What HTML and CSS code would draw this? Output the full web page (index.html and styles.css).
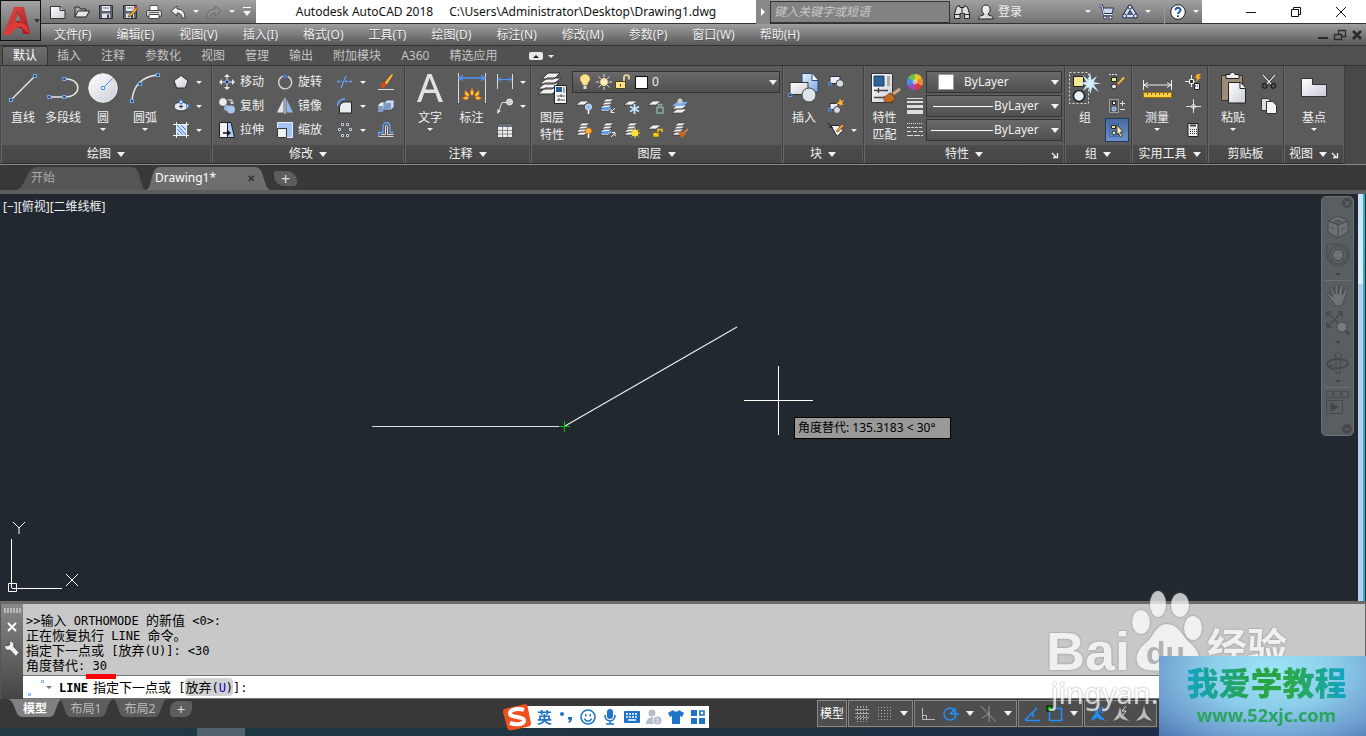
FILE: index.html
```html
<!DOCTYPE html>
<html lang="zh-CN">
<head>
<meta charset="utf-8">
<title>Autodesk AutoCAD 2018</title>
<link rel="stylesheet" href="styles.css">
</head>
<body>
<svg class="sprite" aria-hidden="true">
<defs>
<linearGradient id="gw" x1="0" y1="0" x2="1" y2="1"><stop offset="0" stop-color="#fff"/><stop offset="1" stop-color="#c9cdd8"/></linearGradient>
<linearGradient id="gb" x1="0" y1="0" x2="1" y2="1"><stop offset="0" stop-color="#e4f0ff"/><stop offset="1" stop-color="#7fa8dc"/></linearGradient>
<linearGradient id="gr" x1="0" y1="0" x2="1" y2="1"><stop offset="0" stop-color="#e8554f"/><stop offset="1" stop-color="#a3151c"/></linearGradient>
</defs>
<symbol id="new" viewBox="0 0 16 16"><path d="M.5 2.500h9.500l5 4v8H.5z" fill="url(#gw)" stroke="#333"/><path d="M10 2.500v4h5" fill="#bbb" stroke="#333"/></symbol>
<symbol id="open" viewBox="0 0 16 16"><path d="M1 13V3h4l1.500 2H12v2" fill="#aaa" stroke="#222"/><path d="M1 13l3-6h11.500l-3.500 6z" fill="#e3e6ea" stroke="#222"/></symbol>
<symbol id="save" viewBox="0 0 16 16"><path d="M1.500 1.500h13v13h-13z" fill="#5c6470" stroke="#2d3139"/><path d="M4 2h8v5H4z" fill="#e8ecf4"/><path d="M5 4h6" stroke="#777"/><path d="M4 9.500h8V14H4z" fill="#dfe3ea"/><path d="M9 10.500h2V14H9z" fill="#3b3f48"/></symbol>
<symbol id="saveas" viewBox="0 0 16 16"><use href="#save"/><path d="M7 11l7-8 2 2-7 7-3 1z" fill="#f2b33d" stroke="#5c3a14" stroke-width=".7"/><path d="M13 4l1.500-2L16.500 4 15 5.500z" fill="#d9513a"/></symbol>
<symbol id="print" viewBox="0 0 16 16"><path d="M4 1.500h8v5H4z" fill="#fff" stroke="#555"/><rect x=".5" y="6.500" width="15" height="6" rx="1.500" fill="#d5d9df" stroke="#444"/><path d="M3 10.500h10v4H3z" fill="#fff" stroke="#444"/><path d="M3 8.500h10" stroke="#666"/></symbol>
<symbol id="undo" viewBox="0 0 16 16"><path d="M1 7l6-5v3c5 0 8 3 8 9h-3c0-4-2-5-5-5v3z" fill="#eee" stroke="#333" stroke-width=".9"/></symbol>
<symbol id="redo" viewBox="0 0 16 16"><path d="M15 7L9 2v3c-5 0-8 3-8 9h3c0-4 2-5 5-5v3z" fill="#8f8f8f" stroke="#666" stroke-width=".9"/></symbol>
<symbol id="binoc" viewBox="0 0 16 16"><path d="M2.500 3l3-1.500.5 2h4l.5-2 3 1.500 2 7v4.500h-5v-5H8.500v0h-1v0H6v5H.5V10z" fill="#ddd" stroke="#222"/><path d="M1 10.500h5m4 0h5M8 4v5" stroke="#222"/></symbol>
<symbol id="user" viewBox="0 0 16 16"><path d="M.5 15c.5-3 3-3.500 5-4l.5-1C4 8.500 3.500 6 4 4c.6-4 7.400-4 8 0 .5 2 0 4.500-2 6l.5 1c2 .5 4.500 1 5 4z" fill="url(#gw)" stroke="#222"/></symbol>
<symbol id="cart" viewBox="0 0 16 16"><path d="M1 2h3l2 8h7" fill="none" stroke="#23304d" stroke-width="2.600"/><path d="M5 4h10.500L14 9.500H6z" fill="#ccd8ee" stroke="#23304d"/><path d="M1 2h3l2 8.500h8" fill="none" stroke="#eef" stroke-width="1"/><circle cx="7" cy="13.500" r="1.600" fill="#eef" stroke="#23304d"/><circle cx="12.500" cy="13.500" r="1.600" fill="#eef" stroke="#23304d"/></symbol>
<symbol id="a360" viewBox="0 0 16 16"><path d="M8 3L2.500 12h11z" fill="none" stroke="#23304d" stroke-width="4.500" stroke-linejoin="round"/><path d="M8 3L2.500 12h11z" fill="none" stroke="#d5e0f2" stroke-width="2.500" stroke-linejoin="round"/><circle cx="8" cy="3" r="2" fill="#d5e0f2" stroke="#23304d"/><circle cx="2.500" cy="12" r="2" fill="#d5e0f2" stroke="#23304d"/><circle cx="13.500" cy="12" r="2" fill="#d5e0f2" stroke="#23304d"/></symbol>
<symbol id="help" viewBox="0 0 16 16"><circle cx="8" cy="8" r="7.300" fill="#fff" stroke="#222"/><path d="M5.500 6.300c0-3.600 5.200-3.300 5 0C10.400 8 8 8 8 10" fill="none" stroke="#2456ad" stroke-width="2"/><path d="M7 11.300h2v1.800H7z" fill="#2456ad"/></symbol>
<symbol id="logo" viewBox="0 0 32 32"><path d="M1 30L12 2h10l6 27h-7l-1.500-6h-8L8 30z" fill="url(#gr)"/><path d="M14 4l6 12-3-8-3 9c-4 1-7 4-9 9l7-4 11 2-5-6z" fill="#8e171d"/><path d="M1 30c4-9 8-13 14-13l9 3 4 9-9-7c-4 0-8 3-11 8z" fill="#dd3c38"/><path d="M13 16l3.500-8 2 8z" fill="#7e7e7e"/></symbol>
<symbol id="line" viewBox="0 0 32 32"><path d="M4 28L28 4" stroke="#e6e6e6" stroke-width="1.400"/><path d="M2.500 26.500h3v3h-3zm24-24h3v3h-3z" fill="#333" stroke="#6da8ff" stroke-width="1.200"/></symbol>
<symbol id="pline" viewBox="0 0 32 32"><path d="M2 25h16c17 0 17-18 1-18" fill="none" stroke="#e6e6e6" stroke-width="1.500"/><path d="M.8 23.500h3v3h-3zm15 0h3v3h-3zm0-18h3v3h-3z" fill="#333" stroke="#6da8ff" stroke-width="1.200"/></symbol>
<symbol id="circle" viewBox="0 0 32 32"><circle cx="16" cy="16" r="14.300" fill="url(#gw)" stroke="#eee"/><path d="M16 16L26 6" stroke="#4b8df0"/><path d="M14.500 14.500h3v3h-3z" fill="#fff" stroke="#4b8df0"/></symbol>
<symbol id="arc" viewBox="0 0 32 32"><path d="M3 29C4 14 12 5 28 3" fill="none" stroke="#e6e6e6" stroke-width="1.500"/><path d="M1.500 27.500h3v3h-3zm8-17h3v3h-3zm18-9h3v3h-3z" fill="#333" stroke="#6da8ff" stroke-width="1.200"/></symbol>
<symbol id="poly" viewBox="0 0 16 16"><path d="M8 1.500l7 5.300L12.300 14H3.700L1 6.800z" fill="url(#gw)" stroke="#333"/></symbol>
<symbol id="ellipse" viewBox="0 0 16 16"><ellipse cx="8" cy="8.500" rx="7" ry="4.500" fill="#e1e5ec" stroke="#333"/><path d="M6 8.500h4M8 6.500v4" stroke="#333"/><path d="M6.500 2.500h3v3h-3zm7 4h2v3h-2z" fill="#ddd" stroke="#4b8df0"/></symbol>
<symbol id="hatch" viewBox="0 0 16 16"><path d="M3.500 0v16M13.500 0v16M0 2.500h16M0 13.500h16" stroke="#f0f0f0"/><path d="M4 3h9v10H4z" fill="#cfe1ff"/><path d="M4 7l6 6M4 3l9 10M8 3l5 5M4 11l2 2" stroke="#3b74d8"/></symbol>
<symbol id="move" viewBox="0 0 16 16"><path d="M8 0l3 3H5zM8 16l-3-3h6zM0 8l3-3v6zM16 8l-3 3V5z" fill="#e8e8e8"/><path d="M8 3v3m0 4v3M3 8h3m4 0h3" stroke="#eee"/><path d="M6.500 6.500h3v3h-3z" fill="#223" stroke="#69a3ff"/></symbol>
<symbol id="copy" viewBox="0 0 16 16"><circle cx="4" cy="4" r="3.800" fill="#ececf0"/><circle cx="8" cy="10" r="3" fill="#99b4dc"/><circle cx="12" cy="11.500" r="4" fill="#a9c4ec"/><path d="M9 2h4v3m-2-1l2 2 2-2" fill="none" stroke="#eee"/></symbol>
<symbol id="stretch" viewBox="0 0 16 16"><path d="M.5.5h8v15h-8z" fill="#f3f3f5" stroke="#222"/><path d="M8.500.5H12l3.500 15H8.500z" fill="#a8cdf8" stroke="#222"/><path d="M4 11h6M8 8.500l3 2.500-3 2.500" fill="none" stroke="#111" stroke-width="1.300"/></symbol>
<symbol id="rotate" viewBox="0 0 16 16"><path d="M6 2.200a6.500 6.500 0 1 0 5 .3" fill="none" stroke="#d9d9d9" stroke-width="1.400"/><path d="M7 0l4 2.500L7 5z" fill="#3f7fe4"/></symbol>
<symbol id="mirror" viewBox="0 0 16 16"><path d="M6.500 1v13.500H0z" fill="#e6e6e8"/><path d="M9.500 1v13.500H16z" fill="#8db7ea"/><path d="M8 0v16" stroke="#eee"/></symbol>
<symbol id="scale" viewBox="0 0 16 16"><path d="M.5.5h15v15H.5z" fill="#a4c3f2" stroke="#e9eef8"/><path d="M.5 6.500h9v9h-9z" fill="#f0f0f4" stroke="#333"/></symbol>
<symbol id="trim" viewBox="0 0 16 16"><path d="M0 7.500h5M8 7.500h8" stroke="#69a3ff" stroke-width="1.300" stroke-dasharray="3 1"/><path d="M4 14L9 2" stroke="#69a3ff" stroke-width="1.200"/></symbol>
<symbol id="fillet" viewBox="0 0 16 16"><path d="M2.500 15V10c0-4 3-6 6-6h6v11z" fill="#e9edf2" stroke="#222"/><path d="M0 8C1 4 3 1 8 .8" fill="none" stroke="#69a3ff" stroke-width="1.500"/></symbol>
<symbol id="array" viewBox="0 0 16 16"><path d="M4.500 1.500h2v2h-2zm5 0h2v2h-2zm-8 5h2v2h-2zm11 0h2v2h-2zm-8 6h2v2h-2zm5 0h2v2h-2z" fill="#222" stroke="#c9d4e6"/></symbol>
<symbol id="erase" viewBox="0 0 16 16"><path d="M6 9l7-9h3l-7 11z" fill="#f4b644" stroke="#5a3010" stroke-width=".6"/><path d="M3 11c0-3 3-3 5-1 0 4-3 4-5 4z" fill="#d9471f"/><path d="M0 15.500h16" stroke="#ddd"/></symbol>
<symbol id="explode" viewBox="0 0 16 16"><path d="M0 7l3-3h4v5l-2 5H0z" fill="#dce8f6" stroke="#444" stroke-width=".6"/><path d="M6 5l3-3h7v7l-3 3H6z" fill="#c4d8f0" stroke="#444" stroke-width=".6"/><path d="M0 8h5v6H0zM6 5h7v7H6z" fill="#7d9cc4"/></symbol>
<symbol id="offset" viewBox="0 0 16 16"><path d="M.5 14.500v-4h4.500V5c0-6 7-6 7 0v5.500h3.500" fill="none" stroke="#69a3ff" stroke-width="1.300"/><path d="M.5 14.500h15M3 12.500h4.500V5c0-2.500 2-2.500 2 0v7.500h6" fill="none" stroke="#d8d8d8"/></symbol>
<symbol id="text" viewBox="0 0 32 32"><path d="M3 30L13.500 2h4L29 30h-4.300l-3.300-9H10.200L7 30zm8.500-12.500h8.700L15.700 6z" fill="#e2e2e2"/></symbol>
<symbol id="dim" viewBox="0 0 32 32"><path d="M2.500 1v30M29.500 1v30" stroke="#ddd"/><path d="M3 6h26M7 3.500L3 6l4 2.500M25 3.500L29 6l-4 2.500" fill="none" stroke="#4f94ff" stroke-width="1.400"/><path d="M16 16l2 5-2 3-2-3zM9 18l4 4v3l-4-2zM23 18l-4 4v3l4-2zM6 26l5-2 2 2-3 2zM26 26l-5-2-2 2 3 2z" fill="#ffc93c" stroke="#d06018" stroke-width=".7"/></symbol>
<symbol id="dims" viewBox="0 0 16 16"><path d="M.5 0v15M15.500 0v15" stroke="#ddd"/><path d="M1 5.500h14M4 3L1 5.500 4 8M12 3l3 2.500L12 8" fill="none" stroke="#4f94ff"/></symbol>
<symbol id="leader" viewBox="0 0 16 16"><path d="M1 15L5 4.500h5" fill="none" stroke="#ddd"/><circle cx="12.500" cy="4" r="3" fill="#ccc" stroke="#eee"/><path d="M0 16l.5-5L4 13z" fill="#ddd"/></symbol>
<symbol id="table" viewBox="0 0 16 16"><path d="M.5 1.500h15v14H.5z" fill="#eee" stroke="#555"/><path d="M1 2h14v3H1z" fill="#666e7e"/><path d="M1 8.500h14M1 12h14M5.500 5v10M10.500 5v10" stroke="#888"/></symbol>
<symbol id="layerprop" viewBox="0 0 32 32"><path d="M2 22l7-6h14l-7 6zM2 17l7-6h14l-7 6zM4 12l7-6h14l-7 6zM6 7l6-6h12l-6 6z" fill="#f1f1f1" stroke="#333"/><path d="M18.500 13.500h12v18h-12z" fill="#f4f6fa" stroke="#222"/><path d="M20 15h6v5h-6z" fill="#245a9c"/><path d="M28 15v6M21 24h8M21 28h8M25 22v3M23 26v3" stroke="#555"/></symbol>
<symbol id="stack" viewBox="0 0 16 16"><path d="M0 13l4-3h8l-4 3zM0 10l4-3h8l-4 3zM2 7l3-3h8l-4 3zM3 4l3-3h8l-4 3z" fill="#f3f3f3" stroke="#333" stroke-width=".6"/></symbol>
<symbol id="sheet" viewBox="0 0 16 16"><path d="M0 7l5-4h8L8 7z" fill="#f3f3f3" stroke="#333" stroke-width=".6"/></symbol>
<symbol id="l1" viewBox="0 0 16 16"><use href="#sheet"/><circle cx="12.500" cy="9" r="3" fill="#8bc0f8" stroke="#ddf"/><path d="M12.500 12v4" stroke="#fff" stroke-width="1.500"/></symbol>
<symbol id="l2" viewBox="0 0 16 16"><use href="#stack"/><path d="M0 12l4-3h8l-4 3z" fill="#5e9df2"/><path d="M15 10l-4 4m0-3v3.500h3.500" fill="none" stroke="#eee"/></symbol>
<symbol id="l3" viewBox="0 0 16 16"><use href="#sheet"/><path d="M10.500 6v10M6 8.500l9 5m0-5l-9 5" stroke="#c6e4ff" stroke-width="1.800"/></symbol>
<symbol id="l4" viewBox="0 0 16 16"><use href="#sheet"/><path d="M9 9.500h6V15H9zM10.500 9V6.500h3V9" fill="none" stroke="#89aaa3" stroke-width="1.500"/></symbol>
<symbol id="l5" viewBox="0 0 16 16"><path d="M0 15l5-4h10l-5 4zM0 11l5-4h10l-5 4z" fill="#eee" stroke="#333" stroke-width=".6"/><path d="M0 8l5-4h11l-5 4z" fill="#7eb2f5"/><circle cx="8" cy="3" r="2.500" fill="#ccc"/></symbol>
<symbol id="l6" viewBox="0 0 16 16"><use href="#stack"/><circle cx="12.500" cy="9" r="3" fill="#ffb338" stroke="#e07215"/><path d="M12.500 12v4" stroke="#fff" stroke-width="1.500"/></symbol>
<symbol id="l7" viewBox="0 0 16 16"><use href="#stack"/><path d="M0 12l4-3h8l-4 3z" fill="#5e9df2"/><path d="M11 15l4-4m-3.500-.5H15V14" fill="none" stroke="#eee"/></symbol>
<symbol id="l8" viewBox="0 0 16 16"><use href="#stack"/><path d="M11 6v10M6 11h10M7.500 7.500l7 7m0-7l-7 7" stroke="#ffc933"/><circle cx="11" cy="11" r="3.200" fill="#ffe03a"/></symbol>
<symbol id="l9" viewBox="0 0 16 16"><use href="#sheet"/><path d="M5 10.500h6V15H5z" fill="#f7c51a" stroke="#5a4500" stroke-width=".5"/><path d="M10 10V7.500h4V10" fill="none" stroke="#f7c51a" stroke-width="1.500"/></symbol>
<symbol id="l10" viewBox="0 0 16 16"><use href="#stack"/><path d="M6 11l4-2 4 3-4 4z" fill="#c8691c"/><path d="M12 11l4-4" stroke="#d9914a" stroke-width="1.500"/></symbol>
<symbol id="bulb" viewBox="0 0 16 16"><path d="M8 .8c-5 0-5.500 5-3 7.500L6.500 11h3L11 8.300C13.500 5.800 13 .8 8 .8z" fill="#ffe28d" stroke="#f8d66f"/><path d="M6.500 12h3v3h-3z" fill="#ddd"/></symbol>
<symbol id="sun" viewBox="0 0 16 16"><path d="M8 0v16M0 8h16M2.500 2.500l11 11m0-11l-11 11" stroke="#ddd"/><circle cx="8" cy="8" r="4.300" fill="#fff0bb" stroke="#6a5b3c"/></symbol>
<symbol id="unlock" viewBox="0 0 16 16"><path d="M.5 7.500h10v7H.5z" fill="#ffe37e" stroke="#4a431f"/><path d="M9 7V3c0-2.500 5-2.500 5 0v2.500" fill="none" stroke="#ead99a" stroke-width="1.800"/><path d="M5.500 10v2.500" stroke="#333"/></symbol>
<symbol id="insert" viewBox="0 0 32 32"><path d="M14 1.500h10l6 7V20H14z" fill="url(#gb)" stroke="#2d4a72"/><path d="M24 1.500v7h6" fill="#fff" stroke="#2d4a72"/><path d="M2 10.500h18v12H2z" fill="url(#gw)" stroke="#333"/><circle cx="21" cy="23" r="7" fill="#dfe4ec" stroke="#444"/><path d="M.8 21.500h3v3h-3z" fill="#223" stroke="#69a3ff"/></symbol>
<symbol id="b1" viewBox="0 0 16 16"><path d="M2 2.500h10v7H2z" fill="#eef" stroke="#333"/><circle cx="12" cy="9.500" r="3.800" fill="#d8dbe2" stroke="#444"/><path d="M.7 8.500h2.500V11H.7z" fill="#223" stroke="#69a3ff"/></symbol>
<symbol id="b2" viewBox="0 0 16 16"><path d="M2 5.500h8v6H2z" fill="#eef" stroke="#333"/><circle cx="9" cy="12" r="3.500" fill="#d8dbe2" stroke="#444"/><path d="M12 0l1 3 3-1-2 3 2 2-3-.5L12 9l-.7-3L8 6l3-2z" fill="#ffb52e"/><path d="M.7 10.500h2.500V13H.7z" fill="#223" stroke="#69a3ff"/></symbol>
<symbol id="b3" viewBox="0 0 16 16"><path d="M3 3.500h8l4 5-6 6z" fill="#f5f5f5" stroke="#222"/><path d="M8 9l6-7 2 2-6 6z" fill="#f2a13a" stroke="#5a3010" stroke-width=".6"/><path d="M0 1l4 4m-3 0l4 1" stroke="#222"/></symbol>
<symbol id="match" viewBox="0 0 32 32"><path d="M2.500 1.500h21v29h-21z" fill="url(#gw)" stroke="#333"/><path d="M5 4h10v10H5z" fill="#2e6299" stroke="#173e69"/><path d="M19.500 4v10" stroke="#aaa" stroke-width="3"/><path d="M5 18.500h14M5 25.500h9M9.500 16v5" stroke="#444" stroke-width="1.400"/><path d="M14 25c4 0 5-4 8-4l4 5c-2 5-6 5-10 4z" fill="#c26a22" stroke="#5a2c0c" stroke-width=".7"/><path d="M24 22l7-5" stroke="#d0a887" stroke-width="3"/></symbol>
<symbol id="color" viewBox="0 0 16 16"><path d="M8 8V0a8 8 0 0 1 7 4z" fill="#f4c12a"/><path d="M8 8l7-4a8 8 0 0 1 0 8z" fill="#f08a2c"/><path d="M8 8l7 4a8 8 0 0 1-7 4z" fill="#df3a42"/><path d="M8 8v8a8 8 0 0 1-7-4z" fill="#9b4ac0"/><path d="M8 8l-7 4a8 8 0 0 1 0-8z" fill="#4f88e8"/><path d="M8 8L1 4a8 8 0 0 1 7-4z" fill="#64c447"/><circle cx="8" cy="8" r="2.500" fill="#fff" opacity=".5"/></symbol>
<symbol id="lweight" viewBox="0 0 16 16"><path d="M0 .5h16" stroke="#ddd"/><path d="M0 4h16" stroke="#ddd" stroke-width="2"/><path d="M0 8.500h16" stroke="#ddd" stroke-width="3"/><path d="M0 14h16" stroke="#ddd" stroke-width="4"/></symbol>
<symbol id="ltype" viewBox="0 0 16 16"><path d="M0 1.500h16" stroke="#ddd" stroke-dasharray="1 1"/><path d="M0 5.500h16" stroke="#ddd" stroke-dasharray="3 1"/><path d="M0 9.500h16" stroke="#ddd" stroke-dasharray="4 2"/><path d="M0 13.500h16" stroke="#ddd" stroke-dasharray="6 1"/></symbol>
<symbol id="group" viewBox="0 0 32 32"><path d="M.5.500h19v31H.5z" fill="none" stroke="#ddd" stroke-dasharray="2 2"/><path d="M4.500 4.500h10v10h-10z" fill="#f1e98b" stroke="#222"/><circle cx="10" cy="24" r="5.500" fill="#e5f1fb" stroke="#222" stroke-width="1.500"/><path d="M21 0l1.500 8L28 4l-3.500 6 7.500 1.500-7.500 1L30 20l-7-5-1.500 7-2-7-6 4 4-6-9-2 9-1-4-7 6 5z" fill="#cfeeff"/></symbol>
<symbol id="g1" viewBox="0 0 16 16"><path d="M0 .5h8" stroke="#ddd" stroke-dasharray="2 1"/><path d="M2.500 3.500h5v4h-5z" fill="#f1e98b" stroke="#222"/><circle cx="5" cy="12.500" r="2.500" fill="#dbe7f5" stroke="#222"/><path d="M8 10l6-7 2 1-6 6z" fill="#f2c13a"/><path d="M7 11l2-1 1 1-2 1z" fill="#e33"/></symbol>
<symbol id="g2" viewBox="0 0 16 16"><path d="M.5 1.500h9v13h-9z" fill="none" stroke="#ddd" stroke-dasharray="1 1"/><path d="M3.500 3.500h3v3h-3z" fill="#fff" stroke="#222"/><circle cx="5" cy="11" r="2" fill="#5b96e8" stroke="#bcd"/><path d="M11 5.500h5m-2.500-2.500v5M11 11.500h5" stroke="#ddd"/></symbol>
<symbol id="g3" viewBox="0 0 16 16"><path d="M.5 1.500h9v13h-9z" fill="none" stroke="#1d4fa8" stroke-dasharray="1 1"/><path d="M2.500 3.500h4v3h-4z" fill="#f1e98b" stroke="#222"/><circle cx="5" cy="11" r="2" fill="#dce8f6" stroke="#222"/><path d="M8 3l6 7h-3l2 4-2 1-1.500-4L8 13z" fill="#f7f0a0" stroke="#222" stroke-width=".7"/></symbol>
<symbol id="measure" viewBox="0 0 32 32"><path d="M2.500 8v10M30.500 8v10M3 13h27M7 10.500L3 13l4 2.500M26 10.500l4 2.500-4 2.500" fill="none" stroke="#eee"/><path d="M2.500 20.500h28v5h-28z" fill="#f6d33c" stroke="#a46a08"/><path d="M6.500 21v2M10.500 21v2M14.500 21v2M18.500 21v2M22.500 21v2M26.500 21v2" stroke="#765"/></symbol>
<symbol id="u1" viewBox="0 0 16 16"><path d="M6.500 1v12M0 7.500h10" stroke="#eee"/><path d="M4.500 5.500h4v4h-4z" fill="#333" stroke="#eee"/><path d="M12 0h4l-2 3h2l-5 5 1-4h-2z" fill="#ffa629"/><path d="M9.500 9.500h5v6h-5z" fill="#eee" stroke="#222"/><path d="M10 12h4" stroke="#222" stroke-dasharray="1 1"/></symbol>
<symbol id="u2" viewBox="0 0 16 16"><path d="M8.500 1v14M1 8.500h15" stroke="#ddd"/><circle cx="8.500" cy="8.500" r="2" fill="none" stroke="#ddd"/></symbol>
<symbol id="u3" viewBox="0 0 16 16"><path d="M3 1.500h10v13H3z" fill="#eee" stroke="#222"/><path d="M5 3.500h6" stroke="#444" stroke-width="2"/><path d="M5 7.500h7M5 9.500h7M5 11.500h7" stroke="#333" stroke-dasharray="1 1"/></symbol>
<symbol id="paste" viewBox="0 0 32 32"><path d="M4.500 3.500h21v25h-21z" fill="#9d8d78" stroke="#333"/><path d="M9 2.500h4c1-3 4-3 5 0h4v4H9z" fill="#eee" stroke="#222"/><path d="M11.500 10.500h12l5 6v14.500h-17z" fill="url(#gw)" stroke="#222"/><path d="M23 10.500v6h5.500" fill="#fff" stroke="#222"/></symbol>
<symbol id="cut" viewBox="0 0 16 16"><path d="M2 1l9 10M14 1L5 11" stroke="#222" stroke-width="2.500"/><path d="M2 1l9 10M14 1L5 11" stroke="#eee" stroke-width="1.200"/><path d="M5 10a2.300 2.300 0 1 0 1 2zM11 10a2.300 2.300 0 1 1-1 2z" fill="none" stroke="#222" stroke-width="1.500"/></symbol>
<symbol id="clone" viewBox="0 0 16 16"><path d="M.5.500H7l3 3v9H.5z" fill="#ddd" stroke="#333"/><path d="M5.500 3.500H12l3.500 4v8h-10z" fill="#f5f5f5" stroke="#333"/></symbol>
<symbol id="base" viewBox="0 0 32 32"><path d="M3.500 6.500h11v6h14v12h-25z" fill="url(#gw)" stroke="#333"/></symbol>
<symbol id="cube" viewBox="0 0 24 24"><path d="M12 1l10 5v11l-10 6L2 17V6zM2 6l10 4 10-4M12 10v13" fill="#6e7276"/><path d="M9 5l6 1M5 12l3 2M15 15l4-3" fill="none"/></symbol>
<symbol id="wheel" viewBox="0 0 24 24"><path d="M1 1h11a11 11 0 1 1-11 11z" fill="none"/><circle cx="12" cy="12" r="9" fill="none"/><circle cx="12" cy="12" r="5.500" fill="#6e7276"/><path d="M5 19l3-3m8 0l3 3" fill="none"/></symbol>
<symbol id="hand" viewBox="0 0 24 24"><path d="M8 20L2 13c-2-3 1-3 3-1l2 2L4 6c0-2 2-2 3 0l2 5L9 3c0-2 3-2 3 0v8l2-8c1-2 3-1 3 1l-1 8 3-5c2-2 3 0 2 2l-3 8c-1 3-2 4-3 6H9z" fill="#6e7276"/></symbol>
<symbol id="zoom" viewBox="0 0 24 24"><path d="M1 1l15 15M16 1L1 16M1 6V1h5M11 1h5v5M1 11v5h5" fill="none" stroke-width="1.500"/><circle cx="16" cy="16" r="5" fill="#767a7e"/><path d="M20 20l4 4" stroke-width="3"/></symbol>
<symbol id="orbit" viewBox="0 0 24 24"><path d="M12 1l4 5h-2v17h-4V6H8z" fill="none"/><path d="M3 17C-2 13 4 9 12 9s14 4 8 7c-3 2-8 3-13 2M7 15l-4 2 4 3" fill="none" stroke-width="1.800"/></symbol>
<symbol id="motion" viewBox="0 0 24 24"><path d="M.5 1.500h6v6h-6zm8 0h6v6h-6zm8 0h6v6h-6zM.5 10.500h16v13H.5z" fill="none"/><path d="M5 13l7 4-7 4z" fill="#44484c"/></symbol>
<symbol id="wrench" viewBox="0 0 16 16"><path d="M1 4l3 1 2-2-1-3c4 0 6 3 4.500 5.500l5.500 6-3 4-6-6.500C3 10 0 8 1 4z" fill="#eee" stroke="#333" stroke-width=".7"/></symbol>
</svg>

<header class="top">
  <button class="app-btn" aria-label="应用程序菜单"><svg class="i32"><use href="#logo"/></svg><i class="caret dark"></i></button>
  <div class="title-row">
    <div class="qat">
      <button class="ib"><svg class="i16"><use href="#new"/></svg></button>
      <button class="ib"><svg class="i16"><use href="#open"/></svg></button>
      <button class="ib"><svg class="i16"><use href="#save"/></svg></button>
      <button class="ib"><svg class="i16"><use href="#saveas"/></svg></button>
      <button class="ib"><svg class="i16"><use href="#print"/></svg></button>
      <button class="ib"><svg class="i16"><use href="#undo"/></svg></button>
      <button class="cb"><i class="caret sm"></i></button>
      <button class="ib"><svg class="i16"><use href="#redo"/></svg></button>
      <button class="cb"><i class="caret sm"></i></button>
      <button class="cb more"><i class="caret"></i></button>
    </div>
    <h1 class="title"><span>Autodesk AutoCAD 2018</span><span>C:\Users\Administrator\Desktop\Drawing1.dwg</span></h1>
    <div class="info">
      <button class="cb arrow"><i class="tri"></i></button>
      <input class="search" type="text" placeholder="键入关键字或短语" aria-label="搜索">
      <button class="ib"><svg class="i16"><use href="#binoc"/></svg></button>
      <button class="login"><svg class="i16"><use href="#user"/></svg><span>登录</span></button>
      <button class="cb"><i class="caret sm"></i></button>
      <button class="ib"><svg class="i16"><use href="#cart"/></svg></button>
      <button class="ib"><svg class="i16"><use href="#a360"/></svg></button>
      <button class="cb"><i class="caret sm"></i></button>
      <button class="ib helpb"><svg class="i16"><use href="#help"/></svg></button>
      <button class="cb"><i class="caret sm"></i></button>
    </div>
    <div class="win">
      <button aria-label="最小化"><svg class="w12" viewBox="0 0 12 12"><path d="M1 6.500h10"/></svg></button>
      <button aria-label="还原"><svg class="w12" viewBox="0 0 12 12"><path d="M1.500 3.500h7v7h-7zM3.500 3V1.500h7v7H9"/></svg></button>
      <button aria-label="关闭"><svg class="w12" viewBox="0 0 12 12"><path d="M1 1l10 10M11 1L1 11"/></svg></button>
    </div>
  </div>
  <nav class="menu">
    <a href="#">文件(F)</a><a href="#">编辑(E)</a><a href="#">视图(V)</a><a href="#">插入(I)</a><a href="#">格式(O)</a><a href="#">工具(T)</a><a href="#">绘图(D)</a><a href="#">标注(N)</a><a href="#">修改(M)</a><a href="#">参数(P)</a><a href="#">窗口(W)</a><a href="#">帮助(H)</a>
    <div class="mdi">
      <button aria-label="最小化文档"><svg class="w12" viewBox="0 0 12 12"><path d="M1 9h10" stroke-width="2"/></svg></button>
      <button aria-label="还原文档"><svg class="w12" viewBox="0 0 12 12"><path d="M.5 5.500h7v5h-7zM4.500 5V1.500h7v6H8" stroke-width="1.300"/></svg></button>
      <button aria-label="关闭文档"><svg class="w12" viewBox="0 0 12 12"><path d="M2 2l8 8M10 2l-8 8" stroke-width="2.500"/></svg></button>
    </div>
  </nav>
</header>

<nav class="tabs">
  <a class="on" href="#">默认</a><a href="#">插入</a><a href="#">注释</a><a href="#">参数化</a><a href="#">视图</a><a href="#">管理</a><a href="#">输出</a><a href="#">附加模块</a><a href="#">A360</a><a href="#">精选应用</a>
  <button class="mini" aria-label="最小化功能区"><span class="pill"><i class="up"></i></span><i class="caret sm"></i></button>
</nav>

<main class="ribbon">
  <section class="panel p-draw">
    <div class="body">
      <button class="big"><svg class="i32"><use href="#line"/></svg><span>直线</span></button>
      <button class="big"><svg class="i32"><use href="#pline"/></svg><span>多段线</span></button>
      <button class="big"><svg class="i32"><use href="#circle"/></svg><span>圆</span><i class="caret sm"></i></button>
      <button class="big wide"><svg class="i32"><use href="#arc"/></svg><span>圆弧</span><i class="caret sm"></i></button>
      <div class="col">
        <button class="sm-b"><svg class="i16"><use href="#poly"/></svg><i class="caret sm"></i></button>
        <button class="sm-b"><svg class="i16"><use href="#ellipse"/></svg><i class="caret sm"></i></button>
        <button class="sm-b"><svg class="i16"><use href="#hatch"/></svg><i class="caret sm"></i></button>
      </div>
    </div>
    <h2>绘图<i class="caret"></i></h2>
  </section>
  <section class="panel p-mod">
    <div class="body">
      <div class="col lab">
        <button class="sm-b"><svg class="i16"><use href="#move"/></svg><span>移动</span></button>
        <button class="sm-b"><svg class="i16"><use href="#copy"/></svg><span>复制</span></button>
        <button class="sm-b"><svg class="i16"><use href="#stretch"/></svg><span>拉伸</span></button>
      </div>
      <div class="col lab">
        <button class="sm-b"><svg class="i16"><use href="#rotate"/></svg><span>旋转</span></button>
        <button class="sm-b"><svg class="i16"><use href="#mirror"/></svg><span>镜像</span></button>
        <button class="sm-b"><svg class="i16"><use href="#scale"/></svg><span>缩放</span></button>
      </div>
      <div class="col">
        <button class="sm-b"><svg class="i16"><use href="#trim"/></svg><i class="caret sm"></i></button>
        <button class="sm-b"><svg class="i16"><use href="#fillet"/></svg><i class="caret sm"></i></button>
        <button class="sm-b"><svg class="i16"><use href="#array"/></svg><i class="caret sm"></i></button>
      </div>
      <div class="col">
        <button class="sm-b"><svg class="i16"><use href="#erase"/></svg></button>
        <button class="sm-b"><svg class="i16"><use href="#explode"/></svg></button>
        <button class="sm-b"><svg class="i16"><use href="#offset"/></svg></button>
      </div>
    </div>
    <h2>修改<i class="caret"></i></h2>
  </section>
  <section class="panel p-ann">
    <div class="body">
      <button class="big"><svg class="i32"><use href="#text"/></svg><span>文字</span><i class="caret sm"></i></button>
      <button class="big wide"><svg class="i32"><use href="#dim"/></svg><span>标注</span></button>
      <div class="col">
        <button class="sm-b"><svg class="i16"><use href="#dims"/></svg><i class="caret sm"></i></button>
        <button class="sm-b"><svg class="i16"><use href="#leader"/></svg><i class="caret sm"></i></button>
        <button class="sm-b"><svg class="i16"><use href="#table"/></svg></button>
      </div>
    </div>
    <h2>注释<i class="caret"></i></h2>
  </section>
  <section class="panel p-lay">
    <div class="body">
      <button class="big"><svg class="i32"><use href="#layerprop"/></svg><span>图层<br>特性</span></button>
      <div class="col grow">
        <div class="combo layer"><svg class="i16"><use href="#bulb"/></svg><svg class="i16"><use href="#sun"/></svg><svg class="i16"><use href="#unlock"/></svg><b class="swatch"></b><select aria-label="图层"><option>0</option></select><i class="caret"></i></div>
        <div class="row">
          <button class="sm-b"><svg class="i16"><use href="#l1"/></svg></button><button class="sm-b"><svg class="i16"><use href="#l2"/></svg></button><button class="sm-b"><svg class="i16"><use href="#l3"/></svg></button><button class="sm-b"><svg class="i16"><use href="#l4"/></svg></button><button class="sm-b"><svg class="i16"><use href="#l5"/></svg></button>
        </div>
        <div class="row">
          <button class="sm-b"><svg class="i16"><use href="#l6"/></svg></button><button class="sm-b"><svg class="i16"><use href="#l7"/></svg></button><button class="sm-b"><svg class="i16"><use href="#l8"/></svg></button><button class="sm-b"><svg class="i16"><use href="#l9"/></svg></button><button class="sm-b"><svg class="i16"><use href="#l10"/></svg></button>
        </div>
      </div>
    </div>
    <h2>图层<i class="caret"></i></h2>
  </section>
  <section class="panel p-blk">
    <div class="body">
      <button class="big"><svg class="i32"><use href="#insert"/></svg><span>插入</span></button>
      <div class="col">
        <button class="sm-b"><svg class="i16"><use href="#b1"/></svg></button>
        <button class="sm-b"><svg class="i16"><use href="#b2"/></svg></button>
        <button class="sm-b"><svg class="i16"><use href="#b3"/></svg><i class="caret sm"></i></button>
      </div>
    </div>
    <h2>块<i class="caret"></i></h2>
  </section>
  <section class="panel p-prop">
    <div class="body">
      <button class="big"><svg class="i32"><use href="#match"/></svg><span>特性<br>匹配</span></button>
      <div class="col">
        <button class="sm-b"><svg class="i16"><use href="#color"/></svg></button>
        <button class="sm-b"><svg class="i16"><use href="#lweight"/></svg></button>
        <button class="sm-b"><svg class="i16"><use href="#ltype"/></svg></button>
      </div>
      <div class="col grow">
        <div class="combo colr"><b class="swatch"></b><select aria-label="对象颜色"><option>ByLayer</option></select><i class="caret"></i></div>
        <div class="combo lw"><hr><select aria-label="线宽"><option>ByLayer</option></select><i class="caret"></i></div>
        <div class="combo lt"><hr><select aria-label="线型"><option>ByLayer</option></select><i class="caret"></i></div>
      </div>
    </div>
    <h2>特性<i class="caret"></i><svg class="launch" viewBox="0 0 8 8"><path d="M1 2l4 4M6.500 2v4.500H2"/></svg></h2>
  </section>
  <section class="panel p-grp">
    <div class="body">
      <button class="big"><svg class="i32"><use href="#group"/></svg><span>组</span></button>
      <div class="col">
        <button class="sm-b"><svg class="i16"><use href="#g1"/></svg></button>
        <button class="sm-b"><svg class="i16"><use href="#g2"/></svg></button>
        <button class="sm-b active"><svg class="i16"><use href="#g3"/></svg></button>
      </div>
    </div>
    <h2>组<i class="caret"></i></h2>
  </section>
  <section class="panel p-util">
    <div class="body">
      <button class="big"><svg class="i32"><use href="#measure"/></svg><span>测量</span><i class="caret sm"></i></button>
      <div class="col">
        <button class="sm-b"><svg class="i16"><use href="#u1"/></svg></button>
        <button class="sm-b"><svg class="i16"><use href="#u2"/></svg></button>
        <button class="sm-b"><svg class="i16"><use href="#u3"/></svg></button>
      </div>
    </div>
    <h2>实用工具<i class="caret"></i></h2>
  </section>
  <section class="panel p-util">
    <div class="body">
      <button class="big"><svg class="i32"><use href="#paste"/></svg><span>粘贴</span><i class="caret sm"></i></button>
      <div class="col">
        <button class="sm-b"><svg class="i16"><use href="#cut"/></svg></button>
        <button class="sm-b"><svg class="i16"><use href="#clone"/></svg></button>
      </div>
    </div>
    <h2>剪贴板</h2>
  </section>
  <section class="panel p-view">
    <div class="body">
      <button class="big"><svg class="i32"><use href="#base"/></svg><span>基点</span><i class="caret sm"></i></button>
    </div>
    <h2>视图<i class="caret"></i><svg class="launch" viewBox="0 0 8 8"><path d="M1 2l4 4M6.500 2v4.500H2"/></svg></h2>
  </section>
</main>

<nav class="files">
  <a href="#" class="ftab"><svg viewBox="0 0 140 24" preserveAspectRatio="none"><path d="M0 24C12 22 9 1 24 1h100c12 0 8 20 16 23z" fill="#555"/></svg><span>开始</span></a>
  <a href="#" class="ftab on"><svg viewBox="0 0 140 24" preserveAspectRatio="none"><path d="M0 24C8 22 4 1 16 1h106c12 0 8 21 18 23z" fill="#6e6e6e"/></svg><span>Drawing1*</span><b class="x">✕</b></a>
  <button class="plus" aria-label="新图形">+</button>
</nav>

<section class="canvas">
  <div class="viewport">
    <p class="vlabel">[−][俯视][二维线框]</p>
    <svg class="drawing">
      <path d="M372 232.500h192" stroke="#ddd"/><path d="M565 232L737 133" stroke="#eee" stroke-width="1.200"/>
      <path d="M559 232.500h11M564.500 227v11" stroke="#0b0"/>
      <path d="M744 206.500h69M778.500 172v69" stroke="#fff"/>
    </svg>
    <div class="tip">角度替代: 135.3183 &lt; 30°</div>
    <svg class="ucs" viewBox="0 0 76 74"><path d="M7.500 20v49M8 69.500h50M4.500 64.500h8v8h-8zM9 3l6 6 6-6M15 9v6M62 55l12 12M74 55L62 67"/></svg>
    <div class="navbar">
      <i class="dot">×</i>
      <button aria-label="视图立方体"><svg class="i24"><use href="#cube"/></svg></button>
      <button aria-label="导航控制盘"><svg class="i24"><use href="#wheel"/></svg></button>
      <i class="caret sm"></i><hr>
      <button aria-label="平移"><svg class="i24"><use href="#hand"/></svg></button>
      <button aria-label="缩放"><svg class="i24"><use href="#zoom"/></svg></button>
      <i class="caret sm"></i>
      <button aria-label="动态观察"><svg class="i24"><use href="#orbit"/></svg></button>
      <i class="caret sm"></i><hr>
      <button aria-label="ShowMotion"><svg class="i24"><use href="#motion"/></svg></button>
      <i class="dot end">−</i>
    </div>
  </div>
  <div class="edge"></div>
</section>

<section class="cmd">
  <div class="cmd-side"><i class="grip"></i><button aria-label="关闭"><svg class="w12" viewBox="0 0 12 12"><path d="M2 2l8 8M10 2l-8 8"/></svg></button><button aria-label="自定义"><svg class="i16"><use href="#wrench"/></svg></button></div>
  <div class="cmd-main">
    <div class="log">
      <p><code>&gt;&gt;</code>输入<code> ORTHOMODE </code>的新值<code> &lt;0&gt;:</code></p>
      <p>正在恢复执行<code> LINE </code>命令。</p>
      <p>指定下一点或<code> [</code>放弃<code>(U)]: &lt;30</code></p>
      <p>角度替代<code>: <span class="mark">30</span></code></p>
    </div>
    <div class="prompt">
      <button class="hist" aria-label="最近使用的命令"><i class="q a"></i><i class="q b"></i><i class="caret sm"></i></button>
      <label for="cmdline"><code class="kw">LINE</code>指定下一点或<code> [</code><span class="opt">放弃<code>(<em>U</em>)</code></span><code>]:</code></label>
      <input id="cmdline" type="text">
    </div>
  </div>
</section>

<footer class="bottom">
  <nav class="layouts">
    <a href="#" class="on"><svg viewBox="0 0 52 18" preserveAspectRatio="none"><path d="M0 0h52c-6 2-5 17-12 17H14C6 17 8 3 0 0z" fill="#808080"/></svg><span>模型</span></a>
    <a href="#"><svg viewBox="0 0 52 18" preserveAspectRatio="none"><path d="M0 0h52c-6 2-5 17-12 17H12C4 17 6 3 0 0z" fill="#5d5d5d"/></svg><span>布局1</span></a>
    <a href="#"><svg viewBox="0 0 52 18" preserveAspectRatio="none"><path d="M0 0h52c-6 2-5 17-12 17H12C4 17 6 3 0 0z" fill="#5d5d5d"/></svg><span>布局2</span></a>
    <button class="plus" aria-label="新建布局">+</button>
  </nav>
  <div class="status">
    <div class="grp"><button class="mode">模型</button></div>
    <div class="grp">
      <button class="sb"><svg class="i16" viewBox="0 0 16 16"><path d="M3.500 0v16M6.500 0v16M9.500 0v16M12.500 0v16M1 3.500h14M1 7.500h14M1 11.500h14" stroke="#aaa" stroke-dasharray="2 1"/></svg></button>
      <button class="sb"><svg class="i16" viewBox="0 0 16 16"><path d="M1 1.500h14M1 4.500h14M1 7.500h14M1 10.500h14M1 13.500h14" stroke="#aaa" stroke-dasharray="1 2"/></svg></button>
      <button class="cb"><i class="caret"></i></button>
    </div>
    <div class="grp">
      <button class="sb"><svg class="i16" viewBox="0 0 16 16"><path d="M2.500 2v11.500H15M2.500 9.500h4v4" fill="none" stroke="#bbb"/></svg></button>
      <button class="sb"><svg class="i16 blue" viewBox="0 0 16 16"><circle cx="7" cy="8" r="6"/><path d="M7 8h9M7 8l5-5v5"/></svg></button>
      <button class="cb"><i class="caret"></i></button>
      <button class="sb"><svg class="i16" viewBox="0 0 16 16"><path d="M0 0l15 16M8 0v16M9 7L1 12" stroke="#999" fill="none"/></svg></button>
      <button class="cb"><i class="caret"></i></button>
    </div>
    <div class="grp">
      <button class="sb"><svg class="i16 blue" viewBox="0 0 16 16"><path d="M1 14.500h15M1 14L13 2M6 8h3v3"/></svg></button>
      <button class="sb"><svg class="i16 blue" viewBox="0 0 16 16"><path d="M2.500 2.500h12v12h-12z"/><path d="M0 0h5v5H0z" fill="#0b0" stroke="#030"/></svg></button>
      <button class="cb"><i class="caret"></i></button>
    </div>
    <div class="grp">
      <button class="sb"><svg class="i16" viewBox="0 0 16 16"><path d="M7 0l2 8 7 7-7-2-2-2-2 2-5 2 5-7z" fill="#1e90ff"/><circle cx="12" cy="4" r="2.500" fill="none" stroke="#1e90ff"/></svg></button>
      <button class="sb"><svg class="i16" viewBox="0 0 16 16"><path d="M7 1l2 7 7 7-7-2-2-2-2 2-5 2 5-7z" fill="#bbb"/><path d="M13 0L9 5h4l-3 4" fill="none" stroke="#ddd"/></svg></button>
      <button class="sb"><svg class="i16" viewBox="0 0 16 16"><path d="M8 0l2 8 6 7-6-2-2-2-2 2-6 2 6-7z" fill="#bbb"/></svg></button>
    </div>
  </div>
</footer>
<div class="taskbar"><i></i></div>

<aside class="ime">
  <svg class="sogou" viewBox="0 0 28 28"><path d="M3 5.500L22 1q2 0 2.500 2L28 20q0 3-2 3.500L8 27.500q-3 0-3.500-2L0 9q0-3 3-3.500z" fill="#f0501e"/><path d="M21 7C16 5 7 6 7 10.500s13 2.500 14 6.500-7 5.500-14 3" fill="none" stroke="#fff" stroke-width="4"/></svg>
  <b>英</b>
  <svg viewBox="0 0 16 16"><circle cx="4" cy="5" r="2"/><path d="M10 8h4c0 4-1 5-3 6l-1-1c1-1 2-1 1-2l-1-1z"/></svg>
  <svg viewBox="0 0 16 16"><circle cx="8" cy="8" r="7" fill="none" stroke="#1f74c7" stroke-width="1.600"/><path d="M5 5h1.500v2.500H5zm4.500 0H11v2.500H9.500z"/><path d="M4.500 9.500c1 3.500 6 3.500 7 0" fill="none" stroke="#1f74c7" stroke-width="1.400"/></svg>
  <svg viewBox="0 0 16 16"><rect x="5" y="0" width="6" height="10" rx="3"/><path d="M3 6c0 8 10 8 10 0M8 12v3M4 15h8" fill="none" stroke="#1f74c7" stroke-width="1.600"/></svg>
  <svg viewBox="0 0 16 16"><rect x="0" y="2" width="16" height="12" rx="1"/><path d="M2 5h12M2 8h12" stroke="#fff" stroke-width="1.500" stroke-dasharray="2 1"/><path d="M4 11h8" stroke="#fff" stroke-width="1.500"/></svg>
  <svg viewBox="0 0 16 16"><g fill="#b4bdcb"><circle cx="6" cy="4" r="3.500"/><path d="M0 15c0-9 12-9 12 0z"/><circle cx="11.500" cy="11.500" r="4.500" stroke="#fff"/></g><path d="M10 10.500c1-2 4 0 1.500 1.500v2" fill="none" stroke="#fff"/></svg>
  <svg viewBox="0 0 16 16"><path d="M5 1c1 2 5 2 6 0l5 3-2 4-2-1v8H4V7L2 8 0 4z"/></svg>
  <svg viewBox="0 0 16 16"><path d="M1 1h6v6H1zm0 8h6v6H1zm8 0h6v6H9z"/><path d="M10 2h4v4h-4z" fill="none" stroke="#1f74c7" stroke-width="1.600"/></svg>
</aside>

<svg class="mark-logo" viewBox="1045 590 321 146">
  <g fill="#fff">
    <text x="1046" y="670" class="wm-b">Bai</text>
    <ellipse cx="1141" cy="622" rx="9" ry="12"/><ellipse cx="1158" cy="604" rx="8" ry="13"/><ellipse cx="1180" cy="605" rx="9" ry="12"/><ellipse cx="1193" cy="628" rx="9" ry="12"/>
    <path d="M1167 624c10 0 14 9 21 17 9 8 13 14 10 22-3 7-10 8-31 8s-27-1-30-9c-2-8 3-15 11-21 7-8 9-17 19-17z"/>
    <text x="1207" y="662" class="wm-c">经验</text>
    <text x="1051" y="704" class="wm-j">jingyan.b</text>
  </g>
  <text x="1146" y="664" class="wm-d">du</text>
</svg>
<aside class="promo"><strong>我爱学教程</strong><a href="#">www.52xjc.com</a></aside>
</body>
</html>
```
FILE: styles.css
```css
* { box-sizing: border-box; }
html, body { height: 100%; }
body {
  margin: 0; display: flex; flex-direction: column; overflow: hidden;
  font: 12px/16px "Noto Sans", "Noto Sans CJK SC", sans-serif;
  color: #f0f0f0; background: #383838;
}
a { color: inherit; text-decoration: none; }
p, h1, h2 { margin: 0; font-size: 12px; font-weight: 400; }
i, em { font-style: normal; }
button { border: 0; padding: 0; margin: 0; background: none; color: inherit; font: inherit; display: flex; align-items: center; justify-content: center; flex: none; }
input, select { border: 0; padding: 0; margin: 0; background: none; color: inherit; font: inherit; outline: 0; min-width: 0; appearance: none; }
svg { flex: none; overflow: visible; }
.sprite { position: absolute; width: 0; height: 0; }
.i16 { width: 16px; height: 16px; }
.i24 { width: 24px; height: 24px; }
.i32 { width: 32px; height: 32px; }
.w12 { width: 12px; height: 12px; fill: none; stroke: #111; }
.caret { display: block; width: 0; height: 0; flex: none; border: 4px solid transparent; border-top: 5px solid #f0f0f0; border-bottom: 0; }
.caret.sm { border-width: 3px 3px 0; }
.caret.dark { border-top-color: #2c3a4a; border-width: 4px 3px 0; }
.ib { width: 24px; height: 24px; }
.cb { width: 12px; height: 24px; }

/* title bar and menu */
.top { display: grid; grid-template-columns: 41px 1fr; grid-template-rows: 24px 21px; border-bottom: 1px solid #333; flex: none; background: linear-gradient(#9a9a9a 24px, #9f9f9f 24px, #585858 45px); }
.app-btn { grid-row: 1 / 3; width: 41px; height: 41px; border: 1px solid #111; background: linear-gradient(#a2a2a2, #5f5f5f); }
.title-row { display: flex; background: #fff; border-bottom: 1px solid #333; }
.qat, .info { display: flex; align-items: center; background: linear-gradient(#a0a0a0, #737373); }
.qat { padding-left: 5px; }
.more { width: 18px; flex-direction: column; }
.more::before { content: ""; width: 8px; height: 1px; background: #fff; margin-bottom: 3px; }
.title { flex: 1; display: flex; justify-content: center; gap: 16px; color: #111; line-height: 23px; font-size: 12px; white-space: nowrap; }
.arrow { width: 14px; background: #888; }
.tri { border: 4px solid transparent; border-left-color: #fff; border-right: 0; }
.search { width: 180px; height: 22px; border: 1px solid #333; background: #828282; padding: 0 3px; font-style: italic; }
.search::placeholder { color: #c9c9c9; opacity: 1; }
.login { padding-left: 4px; gap: 4px; width: 108px; justify-content: flex-start; }
.helpb { margin-left: 10px; border-left: 1px solid #999; width: 26px; }
.win { display: flex; width: 164px; justify-content: flex-end; padding-right: 3px; }
.win button { width: 45px; }
.menu { display: flex; align-items: center; gap: 25px; padding: 0 3px 0 13px; height: 21px; text-shadow: 0 1px #555; }
.mdi { display: flex; gap: 5px; margin-left: auto; }
.mdi .w12 { stroke: #2b2b2b; }

/* ribbon tabs */
.tabs { flex: none; display: flex; align-items: flex-end; height: 20px; padding-left: 3px; background: #515151; border-bottom: 1px solid #333; color: #c4c4c4; }
.tabs a { padding: 0 10px; height: 18px; line-height: 18px; }
.tabs .on { color: #fff; background: linear-gradient(#6d6d6d, #5c5c5c); box-shadow: 0 0 0 1px #333; border-radius: 2px 2px 0 0; }
.mini { margin: 0 0 5px 22px; gap: 5px; }
.pill { width: 14px; height: 8px; border-radius: 2px; background: #e8e8e8; display: grid; place-items: center; }
.up { border: 3px solid transparent; border-bottom-color: #222; border-top: 0; }

/* ribbon panels */
.ribbon { flex: none; display: flex; background: #484848; border-bottom: 1px solid #888; padding-left: 1px; }
.panel { display: flex; flex-direction: column; background: #5b5b5b; border-right: 1px solid #3f3f3f; border-bottom: 1px solid #2b2b2b; box-shadow: inset 1px 0 #676767; }
.body { display: flex; height: 79px; padding: 4px 2px 0; }
.panel h2 { position: relative; display: flex; align-items: center; justify-content: center; gap: 6px; height: 18px; margin: 0 1px; background: linear-gradient(#4c4c4c, #464646); }
.launch { position: absolute; right: 4px; top: 6px; width: 8px; height: 8px; fill: none; stroke: #eee; stroke-width: 1.3; }
.big { flex-direction: column; justify-content: flex-start; width: 40px; padding-top: 2px; white-space: nowrap; line-height: 17px; }
.big.wide { width: 44px; }
.big span { margin-top: 5px; }
.big .caret { margin-top: 2px; }
.col { display: flex; flex-direction: column; }
.row { display: flex; }
.grow { flex: 1; min-width: 0; }
.sm-b { height: 24px; justify-content: flex-start; padding: 0 4px; width: 24px; }
.sm-b .caret { margin-left: 7px; }
.col:has(.caret.sm) { width: 36px; }
.lab { width: 58px; }
.lab .sm-b { width: 58px; gap: 5px; white-space: nowrap; }
.active { background: linear-gradient(#47689c, #6d94cc); box-shadow: inset 0 0 0 1px #243a60; }
.p-draw { width: 211px; }
.p-draw .col { margin-left: 2px; }
.p-mod { width: 193px; }
.p-mod .lab:first-child { margin-left: 1px; }
.p-mod .col:nth-child(3) { margin-left: 2px; width: 41px; }
.p-ann { width: 126px; }
.p-ann .body { padding-left: 5px; }
.p-ann .wide { width: 43px; }
.p-lay { width: 252px; }
.p-lay .body { padding-left: 1px; }
.p-blk { width: 81px; }
.p-blk .body, .p-prop .body { padding-left: 1px; }
.p-prop { width: 201px; }
.p-prop .big { width: 37px; }
.p-prop .body { padding-left: 2px; }
.p-prop .col:nth-child(2) { width: 23px; }
.p-grp { width: 67px; }
.p-grp .body { padding: 4px 0 0; }
.p-util { width: 76px; }
.p-util .body { padding-left: 5px; gap: 4px; }
.p-view { width: 61px; }
.p-view .body { justify-content: center; }
.p-view h2 { justify-content: flex-start; padding-left: 4px; }
.combo { display: flex; align-items: center; height: 22px; margin: 1px 0; padding: 0 2px 0 4px; border: 1px solid #333; background: linear-gradient(#6a6a6a, #505050); gap: 2px; }
.combo select { flex: 1; height: 20px; }
.combo.layer { gap: 3px; }
.swatch { width: 13px; height: 13px; background: #fff; border: 1px solid #111; margin: 0 1px; }
.colr .swatch { width: 16px; height: 16px; border-color: #999; margin: 0 8px 0 7px; }
.combo hr { width: 60px; margin: 0 -1px 0 2px; border: 0; border-top: 1px solid #fff; }
.combo.lt hr { width: 62px; margin-left: 0; }

/* file tabs */
.files { flex: none; display: flex; align-items: flex-end; height: 29px; padding: 0 0 0 16px; background: #383838; border-bottom: 4px solid #5d5d5d; }
.ftab { position: relative; display: flex; align-items: center; justify-content: space-between; height: 24px; width: 130px; padding: 0 20px 0 15px; color: #aaa; isolation: isolate; }
.ftab svg { position: absolute; inset: 0; width: 100%; height: 100%; z-index: -1; }
.ftab.on { color: #fff; width: 125px; padding: 0 16px 0 9px; }
.x { color: #333; font-size: 10px; }
.files .plus { width: 23px; height: 15px; margin: 0 0 4px 3px; border-radius: 2px 10px 4px 10px; background: #5d5d5d; color: #ddd; font-size: 16px; line-height: 14px; }

/* drawing area */
.canvas { flex: 1; min-height: 0; display: flex; background: #212830; border-right: 1px solid #222; }
.viewport { position: relative; flex: 1; overflow: hidden; }
.edge { width: 7px; background: linear-gradient(#cfe0f4, #e2edf8 90px, #b9cfea 90px); border-right: 2px solid #15b9df; }
.vlabel { padding: 5px 3px; }
.drawing { position: absolute; inset: 0; width: 100%; height: 100%; fill: none; }
.tip { position: absolute; left: 794px; top: 223px; height: 22px; line-height: 20px; padding: 0 14px 0 3px; border: 1px solid #000; background: #999; color: #000; white-space: nowrap; }
.ucs { position: absolute; left: 4px; bottom: 8px; width: 76px; height: 74px; fill: none; stroke: #fff; }
.navbar { position: absolute; right: 4px; top: 2px; width: 33px; display: flex; flex-direction: column; align-items: center; border-radius: 5px; background: #595e61; border: 1px solid #6b7074; }
.navbar button { height: 28px; }
.navbar svg { stroke: #44494d; fill: none; }
.navbar .caret { border-top-color: #3c4044; margin: 4px 0; }
.navbar hr { width: 26px; margin: 0; border: 0; border-top: 1px solid #6b7074; }
.dot { align-self: flex-end; width: 10px; height: 10px; margin: 1px 1px 5px; border-radius: 5px; background: #474b4e; color: #6b7074; font-size: 10px; line-height: 10px; text-align: center; }
.dot.end { margin: 8px 1px 1px; }

/* command window */
.cmd { flex: none; display: flex; border-top: 3px solid #6b6b6b; border-right: 1px solid #666; color: #000; }
.cmd-side { width: 23px; display: flex; flex-direction: column; align-items: center; gap: 8px; padding-top: 4px; background: linear-gradient(#888, #444); border-left: 1px solid #555; }
.cmd-side .w12 { stroke: #fff; stroke-width: 2; }
.grip { width: 17px; height: 5px; background: repeating-linear-gradient(90deg, #bbb 0 2px, transparent 2px 3px); }
.cmd-main { flex: 1; font-size: 13px; }
.log { background: #c8c8c8; padding: 9px 3px 2px; line-height: 15px; border-bottom: 1px solid #777; }
.log p { font-size: 13px; height: 15px; white-space: pre; }
code { font: 12px/15px "DejaVu Sans Mono", monospace; white-space: pre; }
.mark { position: relative; }
.mark::after { content: ""; position: absolute; left: -6px; right: -9px; top: 15px; height: 5px; background: #f00; }
.prompt { display: flex; align-items: center; height: 23px; background: #fff; border-bottom: 1px solid #777; }
.prompt label { white-space: pre; line-height: 18px; }
.prompt input { flex: 1; }
.kw { font-weight: 700; margin-right: 5px; }
.opt { background: #d2d2d2; border-radius: 4px; }
.opt em { color: #00c; }
.hist { position: relative; width: 36px; height: 22px; }
.hist .caret { margin-left: 16px; border-top-color: #777; }
.q { position: absolute; width: 3px; height: 3px; border: 1px solid #8fb7f5; }
.q.a { left: 18px; top: 4px; }
.q.b { left: 5px; top: 17px; }

/* layouts and status bar */
.bottom { flex: none; display: flex; height: 29px; background: #383838; }
.layouts { display: flex; padding-left: 8px; }
.layouts a { position: relative; isolation: isolate; width: 54px; height: 19px; line-height: 19px; text-align: center; color: #bbb; }
.layouts svg { position: absolute; left: 0; top: 0; width: 100%; height: 100%; z-index: -1; }
.layouts .on { color: #fff; font-weight: 700; margin-right: -3px; }
.layouts .plus { width: 22px; height: 16px; margin: 2px 0 0 3px; border-radius: 8px 2px 8px 4px; background: #5d5d5d; color: #ddd; font-size: 15px; line-height: 14px; }
.status { display: flex; gap: 1px; margin-left: auto; padding-right: 209px; height: 27px; margin-top: 1px; }
.grp { display: flex; align-items: center; border: 1px solid #888; background: #4e4e4e; padding: 0 1px; }
.mode { color: #fff; width: 26px; }
.sb { width: 23px; height: 24px; }
.status .cb { width: 15px; }
.blue { fill: none; stroke: #1e90ff; stroke-width: 1.5; }
.taskbar { flex: none; height: 8px; background: linear-gradient(90deg, #1f3a45, #1f3344 60%, #1e2a4a); padding-left: 197px; }
.taskbar i { display: block; width: 48px; height: 8px; background: #51646d; }

/* floating overlays */
.ime { position: fixed; left: 503px; bottom: 8px; display: flex; align-items: center; gap: 6px; height: 22px; width: 206px; padding-right: 4px; background: linear-gradient(90deg, transparent 14px, #fff 14px); fill: #1f74c7; color: #1f74c7; justify-content: space-between; }
.ime svg { width: 16px; height: 16px; }
.ime .sogou { width: 28px; height: 28px; }
.ime b { font-size: 15px; }
.mark-logo { position: fixed; right: 0; bottom: 0; width: 321px; height: 146px; opacity: .72; filter: drop-shadow(0 0 1px #777); pointer-events: none; }
.wm-b { font: 700 54px "Liberation Sans", sans-serif; }
.wm-c { font: 700 40px "Noto Sans CJK SC", sans-serif; }
.wm-j { font: 29px "Noto Sans", sans-serif; }
.wm-d { font: 700 32px "Liberation Sans", sans-serif; fill: #aaa; }
.promo { position: fixed; right: 0; bottom: 0; width: 207px; height: 80px; display: flex; flex-direction: column; align-items: center; padding: 3px 0 0 8px; background: radial-gradient(ellipse at 55% 20%, #9be6f6, #8ccdea 40%, #6f9fd0 75%, #4c78b0); }
.promo strong { font: 900 32px/44px "Noto Sans CJK SC", sans-serif; background: linear-gradient(90deg, #12a5c4, #28a440 45%, #2aa84a 65%, #12a5c8); background-clip: text; color: transparent; }
.promo a { font: 700 18px/24px "Noto Sans", sans-serif; color: #28a55e; }
```
